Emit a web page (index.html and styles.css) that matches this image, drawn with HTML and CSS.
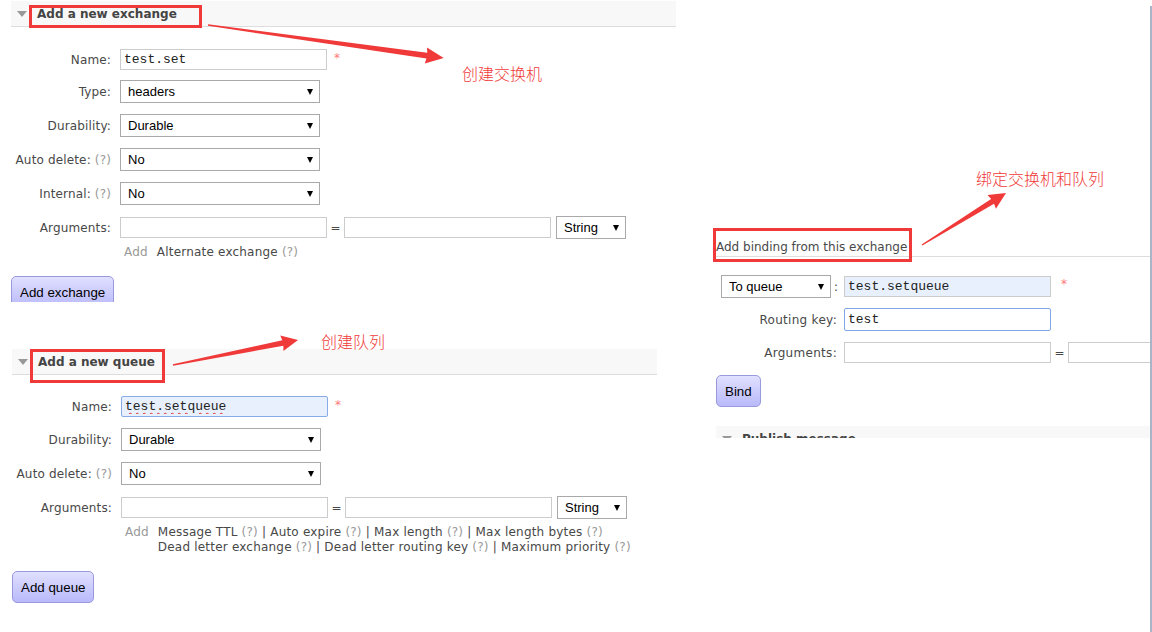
FILE: index.html
```html
<!DOCTYPE html>
<html>
<head>
<meta charset="utf-8">
<title>RabbitMQ</title>
<link rel="stylesheet" href="styles.css">
</head>
<body>
<div class="page">
  <div class="left">
    <section class="sec sec-ex">
      <div class="hdr"><span class="tri"></span><h2>Add a new exchange</h2></div>
      <div class="form">
        <div class="row row-name row-first"><label class="lbl">Name:</label><input class="inp" value="test.set"><span class="req">*</span></div>
        <div class="row"><label class="lbl">Type:</label><span class="sel"><select><option>headers</option></select></span></div>
        <div class="row"><label class="lbl">Durability:</label><span class="sel"><select><option>Durable</option></select></span></div>
        <div class="row"><label class="lbl">Auto delete: <span class="q">(?)</span></label><span class="sel"><select><option>No</option></select></span></div>
        <div class="row"><label class="lbl">Internal: <span class="q">(?)</span></label><span class="sel"><select><option>No</option></select></span></div>
        <div class="row row-args"><label class="lbl">Arguments:</label><input class="inp"><span class="eq">=</span><input class="inp"><span class="sel sel-s"><select><option>String</option></select></span></div>
      </div>
      <div class="hint"><span class="add">Add</span><span>Alternate exchange <span class="q">(?)</span></span></div>
      <div class="btn-clip"><button class="btn">Add exchange</button></div>
    </section>

    <section class="sec sec-q">
      <div class="hdr"><span class="tri"></span><h2>Add a new queue</h2></div>
      <div class="form">
        <div class="row row-name"><label class="lbl">Name:</label><input class="inp inp-auto inp-spell" value="test.setqueue"><span class="req">*</span></div>
        <div class="row"><label class="lbl">Durability:</label><span class="sel"><select><option>Durable</option></select></span></div>
        <div class="row"><label class="lbl">Auto delete: <span class="q">(?)</span></label><span class="sel"><select><option>No</option></select></span></div>
        <div class="row row-args"><label class="lbl">Arguments:</label><input class="inp"><span class="eq">=</span><input class="inp"><span class="sel sel-s"><select><option>String</option></select></span></div>
      </div>
      <div class="hint"><span class="add">Add</span><div>Message TTL <span class="q">(?)</span> | Auto expire <span class="q">(?)</span> | Max length <span class="q">(?)</span> | Max length bytes <span class="q">(?)</span><br>Dead letter exchange <span class="q">(?)</span> | Dead letter routing key <span class="q">(?)</span> | Maximum priority <span class="q">(?)</span></div></div>
      <div class="btn-row"><button class="btn">Add queue</button></div>
    </section>
  </div>

  <div class="right">
    <h3>Add binding from this exchange</h3>
    <div class="bform">
      <div class="row"><div class="lbl lbl-sel"><span class="sel sel-q"><select><option>To queue</option></select></span><span class="colon">:</span></div><input class="inp inp-auto" value="test.setqueue"><span class="req req-r">*</span></div>
      <div class="row"><label class="lbl">Routing key:</label><input class="inp inp-focus" value="test"></div>
      <div class="row"><label class="lbl">Arguments:</label><input class="inp"><span class="eq">=</span><input class="inp"></div>
    </div>
    <div class="bind-wrap"><button class="btn">Bind</button></div>
    <div class="pub"><div class="hdr"><span class="tri"></span><h2>Publish message</h2></div></div>
  </div>
  <div class="edge"></div>

  <div class="box box-ex"></div>
  <div class="box box-q"></div>
  <div class="box box-b"></div>
  <div class="note note-ex">创建交换机</div>
  <div class="note note-q">创建队列</div>
  <div class="note note-b">绑定交换机和队列</div>
  <svg class="arrows" width="1152" height="632" viewBox="0 0 1152 632">
    <polygon class="arrow" transform="translate(208 25) rotate(7.96)" points="0,-0.7 221,-3 220,-8 238,0 220,8 221,3 0,0.7"/>
    <polygon class="arrow" transform="translate(173 365) rotate(-11.31)" points="0,-0.7 112,-2.8 111,-8 127.5,0 111,8 112,2.8 0,0.7"/>
    <polygon class="arrow" transform="translate(922 245) rotate(-31.76)" points="0,-0.7 83,-2.8 82,-8 98.8,0 82,8 83,2.8 0,0.7"/>
  </svg>
</div>
</body>
</html>
```

FILE: styles.css
```css
* { box-sizing: border-box; }

body {
  margin: 0;
  background: #fff;
  color: #484848;
  font-family: "DejaVu Sans", Verdana, sans-serif;
  font-size: 12px;
}

.page {
  position: relative;
  display: flex;
  width: 1152px;
  height: 632px;
  overflow: hidden;
}

.left {
  flex: none;
  width: 713px;
  padding: 1px 0 0 11px;
}

.right {
  flex: none;
  width: 437px;
  overflow: hidden;
  padding-top: 239px;
}

.edge {
  flex: none;
  width: 2px;
  margin-top: 6px;
  background: #aab4c8;
}

/* section headers */
.hdr {
  display: flex;
  align-items: center;
  height: 26px;
  background: #f8f8f8;
  border-bottom: 1px solid #ddd;
}
.sec-ex .hdr { width: 665px; }
.sec-q { margin: 47px 0 0 1px; }
.sec-q .hdr { width: 645px; }

.tri {
  flex: none;
  width: 0;
  height: 0;
  border-left: 5px solid transparent;
  border-right: 5px solid transparent;
  border-top: 6px solid #999;
  margin: 0 10px 0 6px;
}
.hdr h2 {
  margin: 0;
  font-size: 12px;
  font-weight: bold;
  color: #444;
  white-space: nowrap;
}

/* forms */
.form {
  margin-top: 22px;
  display: flex;
  flex-direction: column;
  gap: 11px;
}
.sec-q .form { margin-top: 21px; }

.row {
  display: flex;
  align-items: center;
  height: 23px;
  white-space: nowrap;
}
.row-name { height: 21px; }
.row-first { margin-bottom: -1px; }

.lbl {
  flex: none;
  width: 100px;
  margin-right: 9px;
  text-align: right;
  white-space: nowrap;
  letter-spacing: 0.15px;
}
.q { color: #999; }

.inp {
  flex: none;
  width: 207px;
  height: 21px;
  margin: 0;
  padding: 0 3px;
  border: 1px solid #ccc;
  background: #fff;
  color: #222;
  font-family: "Liberation Mono", "Courier New", monospace;
  font-size: 13px;
  outline: none;
}
.inp-auto { background: #e8f0fe; }
.sec-q .inp-auto { border-color: #86abe6; border-radius: 2px; }
.inp-spell {
  text-decoration: underline wavy #e03030;
  text-decoration-thickness: 1px;
  text-underline-offset: 2px;
}
.inp-focus {
  height: 23px;
  border-color: #7ea7e8;
  border-radius: 2px;
}

.req {
  align-self: flex-start;
  margin-left: 7px;
  padding-top: 3px;
  line-height: 12px;
  color: #f77;
}
.req-r { margin-left: 10px; }

.sel {
  position: relative;
  display: inline-block;
  flex: none;
  height: 23px;
  letter-spacing: 0;
}
.sel select {
  -webkit-appearance: none;
  appearance: none;
  display: block;
  width: 200px;
  height: 23px;
  margin: 0;
  padding: 0 0 0 7px;
  border: 1px solid #a9a9a9;
  border-radius: 0;
  background: #fff;
  color: #000;
  font-family: "Liberation Sans", Arial, sans-serif;
  font-size: 13px;
  outline: none;
}
.sel::after {
  content: "";
  position: absolute;
  right: 7px;
  top: 9px;
  border-left: 3px solid transparent;
  border-right: 3px solid transparent;
  border-top: 6px solid #000;
}
.sel-s select { width: 70px; }
.sel-q select { width: 110px; }

.eq {
  flex: none;
  width: 17px;
  text-align: center;
}
.row-args .sel { margin-left: 5px; }

.hint {
  display: flex;
  margin: 6px 0 0 113px;
  line-height: 15px;
  white-space: nowrap;
  letter-spacing: 0.2px;
}
.add {
  color: #999;
  margin-right: 9px;
}

/* buttons */
.btn {
  height: 32px;
  margin: 0;
  padding: 0 8px;
  border: 1px solid #9999dd;
  border-radius: 5px;
  background: linear-gradient(#e0e0ff, #b9b9fb);
  color: #000;
  font-family: "Liberation Sans", Arial, sans-serif;
  font-size: 13.33px;
}
.btn-clip {
  margin-top: 16px;
  height: 26px;
  overflow: hidden;
}
.btn-row { margin-top: 16px; }

/* right: binding */
.right h3 {
  margin: 0;
  padding: 0 0 1px 3px;
  border-bottom: 1px solid #ddd;
  font-size: 12px;
  font-weight: normal;
  line-height: 16px;
  white-space: nowrap;
}
.bform {
  margin-top: 18px;
  padding-left: 8px;
  display: flex;
  flex-direction: column;
  gap: 10px;
}
.bform .lbl {
  width: 116px;
  margin-right: 7px;
  letter-spacing: 0.3px;
}
.lbl-sel {
  display: flex;
  align-items: center;
}
.colon { margin-left: 3px; }

.bind-wrap { margin: 11px 0 0 3px; }

.pub {
  margin: 19px 0 0 3px;
  height: 12px;
  overflow: hidden;
}

/* annotations */
.box {
  position: absolute;
  border: 3px solid #f03a3a;
}
.box-ex { left: 29px; top: 5px; width: 173px; height: 23px; }
.box-q { left: 30px; top: 349px; width: 135px; height: 34px; }
.box-b { left: 713px; top: 228px; width: 199px; height: 34px; }

.note {
  position: absolute;
  color: #f03a3a;
  font-family: "Noto Sans CJK SC", sans-serif;
  font-size: 16px;
  font-weight: 300;
  line-height: 16px;
  white-space: nowrap;
}
.note-ex { left: 462px; top: 65px; }
.note-q { left: 321px; top: 333px; }
.note-b { left: 976px; top: 170px; }

.arrows {
  position: absolute;
  left: 0;
  top: 0;
  pointer-events: none;
}
.arrow { fill: #f03a3a; }
```
